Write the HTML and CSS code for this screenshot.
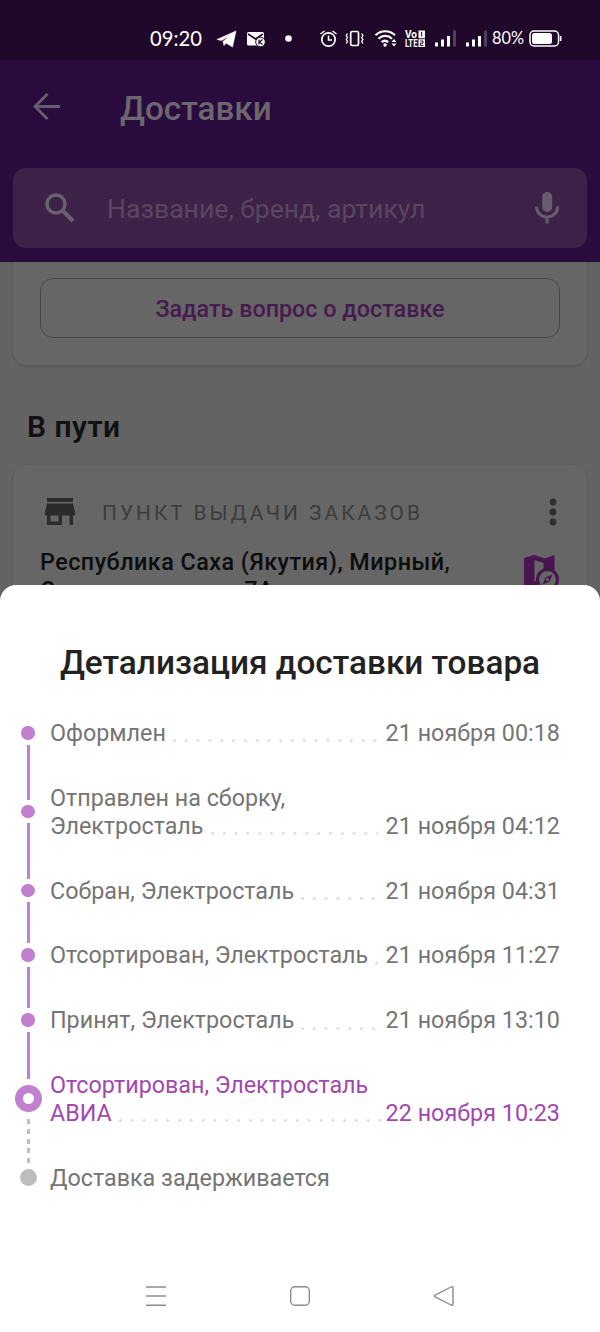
FILE: index.html
```
<!DOCTYPE html>
<html lang="ru">
<head>
<meta charset="utf-8">
<title>Доставки</title>
<link rel="stylesheet" href="styles.css">
</head>
<body>
<div class="screen">
  <div class="backdrop">
    <div class="status">
      <span class="time">09:20</span>
      <svg class="status-icons" width="390" height="60" viewBox="210 0 390 60" fill="none" stroke="#fff">
        <path d="M217 39.500 236 31 232.500 47 226 43 224 45.500 223 41.500 230 35.500 221.500 40.500Z" fill="#fff" stroke="#fff" stroke-width=".6"/>
        <rect x="247" y="32" width="17" height="13.500" rx="1.500" fill="#fff" stroke="none"/>
        <path d="M248 34 255.500 39 263 34" stroke="#1f0829" stroke-width="1.600"/>
        <circle cx="260.500" cy="42" r="4.800" fill="#fff" stroke="#1f0829"/>
        <path d="M259 39.500v5M262.500 39.500l-3 2.500 3 2.500" stroke="#1f0829" stroke-width="1.200"/>
        <circle cx="288.500" cy="38.500" r="3.300" fill="#fff" stroke="none"/>
        <circle cx="328.500" cy="39.500" r="6.700" stroke-width="1.700"/>
        <path d="M328.500 35.500v4.500h3.500M320.500 34l4-3M336.500 34l-4-3" stroke-width="1.500"/>
        <rect x="350.700" y="31.500" width="7.800" height="14" rx="1.500" stroke-width="1.700"/>
        <path d="M347.500 33.500l-1.200 2 1.200 2-1.200 2 1.200 2-1.200 2M361.700 33.500l1.200 2-1.200 2 1.200 2-1.200 2 1.200 2" stroke-width="1.300"/>
        <path d="M375.500 35.200a14 14 0 0 1 19.500 0M378.500 38.700a9.600 9.600 0 0 1 13.500 0M381.600 42.100a5.200 5.200 0 0 1 6.600 0" stroke-width="2.200"/>
        <circle cx="385" cy="45" r="1.700" fill="#fff" stroke="none"/>
        <path d="M391.500 42 394 39l2.500 3zM391.500 43.500l2.500 3 2.500-3z" fill="#fff" stroke="none"/>
        <g fill="#fff" stroke="none" class="volte">
          <text x="405" y="38" textLength="12" lengthAdjust="spacingAndGlyphs">Vo</text>
          <text x="405" y="47" textLength="12.500" lengthAdjust="spacingAndGlyphs">LTE</text>
        </g>
        <path d="M418.500 30.500h6.500v7.800h-6.500zM418.500 39.300h6.500v7.800h-6.500z" fill="#fff" stroke="none"/>
        <path d="M421.700 32v4.500M420.200 41h2.800v2.200h-2.500v2.200h3" stroke="#1f0829"/>
        <g fill="#fff" stroke="none">
          <path d="M435 42.500h3v4h-3zM441 39.500h3v7h-3zM447 36h3v10.500h-3z"/>
          <path d="M453 30.500h3v16h-3zM484 30.500h3v16h-3z" opacity=".22"/>
          <path d="M466 42.500h3v4h-3zM472 39.500h3v7h-3zM478 36h3v10.500h-3z"/>
        </g>
        <text x="492" y="44" class="percent" textLength="32" lengthAdjust="spacingAndGlyphs" fill="#fff" stroke="none">80%</text>
        <rect x="530" y="31" width="28.500" height="15" rx="4" stroke-width="1.500"/>
        <rect x="532" y="33" width="20" height="11" rx="2.500" fill="#fff" stroke="none"/>
        <path d="M560.600 36v5" stroke-width="1.700"/>
      </svg>
    </div>
    <header class="header">
      <div class="title-bar">
        <svg width="28" height="28" viewBox="0 0 28 28" fill="none" stroke="#665d6c" stroke-width="3"><path d="M27 13.500H3M14.500 1 2 13.500 14.500 26"/></svg>
        <h1 class="page-title">Доставки</h1>
      </div>
      <div class="search">
        <svg width="32" height="32" viewBox="0 0 32 32" fill="none" stroke="#696070"><circle cx="12" cy="12" r="9" stroke-width="3.400"/><path d="M18.500 18.500 29 29" stroke-width="4"/></svg>
        <span class="placeholder">Название, бренд, артикул</span>
        <svg width="26" height="34" viewBox="0 0 26 34"><rect x="8.200" y="1" width="10" height="20" rx="5" fill="#695c70"/><path d="M2.500 15.500a10.600 10.600 0 0 0 21.200 0M13.100 26v6.500" fill="none" stroke="#695c70" stroke-width="3"/></svg>
      </div>
    </header>
    <div class="content">
      <div class="card card-question"><div class="outline-button">Задать вопрос о доставке</div></div>
      <h2 class="section-title">В пути</h2>
      <div class="card card-point">
        <div class="point-head">
          <svg width="32" height="28" viewBox="0 0 32 28" fill="#2b2b2b"><path d="M3 0h26v4H3zM3 5.500h26L31 14v3.500H29V27h-3.500v-9.500H18V27H3V17.500H1V14zM6.500 17.500v6h8v-6z" fill-rule="evenodd"/></svg>
          <span class="point-label">ПУНКТ ВЫДАЧИ ЗАКАЗОВ</span>
          <svg width="8" height="28" viewBox="0 0 8 28" fill="#303030"><circle cx="4" cy="4" r="3.400"/><circle cx="4" cy="14" r="3.400"/><circle cx="4" cy="24" r="3.400"/></svg>
        </div>
        <div class="point-body">
          <p class="address">Республика Саха (Якутия), Мирный,<br><span class="street">Советская улица</span> 7А</p>
          <svg class="map" width="38" height="38" viewBox="0 0 38 38"><path d="M1 3 11 0 22 3.500 31.500 0V30L21 34 11 30 1 34Z" fill="#481550"/><path d="M11.500 5 20.500 8V29L11.500 26Z" fill="#666"/><circle cx="24.500" cy="24.500" r="10" fill="#666" stroke="#481550" stroke-width="3"/><path d="M29.500 19.500 26.500 26.500 19.500 29.500 22.500 22.500Z" fill="#481550"/><circle cx="24.500" cy="24.500" r="1.400" fill="#666"/></svg>
        </div>
      </div>
    </div>
  </div>
  <section class="sheet">
    <h2 class="sheet-title">Детализация доставки товара</h2>
    <ol class="timeline">
      <li class="step first"><div class="track"><i class="line"></i><b class="dot"></b><i class="line"></i></div><span class="label">Оформлен</span><span class="leader"></span><time>21 ноября 00:18</time></li>
      <li class="step"><div class="track"><i class="line"></i><b class="dot"></b><i class="line"></i></div><span class="label">Отправлен на сборку,<br>Электросталь</span><span class="leader from-second"></span><time>21 ноября 04:12</time></li>
      <li class="step"><div class="track"><i class="line"></i><b class="dot"></b><i class="line"></i></div><span class="label">Собран, Электросталь</span><span class="leader"></span><time>21 ноября 04:31</time></li>
      <li class="step"><div class="track"><i class="line"></i><b class="dot"></b><i class="line"></i></div><span class="label">Отсортирован, Электросталь</span><span class="leader"></span><time>21 ноября 11:27</time></li>
      <li class="step"><div class="track"><i class="line"></i><b class="dot"></b><i class="line"></i></div><span class="label">Принят, Электросталь</span><span class="leader"></span><time>21 ноября 13:10</time></li>
      <li class="step current"><div class="track"><i class="line"></i><b class="dot"></b><i class="line dashed"></i></div><span class="label">Отсортирован, Электросталь<br>АВИА</span><span class="leader from-current"></span><time>22 ноября 10:23</time></li>
      <li class="step pending"><div class="track"><i class="line dashed"></i><b class="dot"></b><i class="line"></i></div><span class="label">Доставка задерживается</span></li>
    </ol>
    <nav class="system-nav">
      <svg width="22" height="22" viewBox="0 0 22 22" stroke="#8c8c8c" stroke-width="1.500"><path d="M1 2h20M1 11h20M1 20.300h20"/></svg>
      <svg width="22" height="22" viewBox="0 0 22 22" fill="none" stroke="#8c8c8c" stroke-width="1.400"><rect x="1.700" y="1.700" width="18.600" height="18.600" rx="4"/></svg>
      <svg width="22" height="22" viewBox="0 0 22 22" fill="none" stroke="#8c8c8c" stroke-width="1.400" stroke-linejoin="round"><path d="M2 10.200 18 2Q20 1.300 20 3.200V18.800Q20 20.700 18 20L2 11.800Q.8 11 2 10.200Z"/></svg>
    </nav>
  </section>
</div>
</body>
</html>
```
FILE: styles.css
```
* { box-sizing: border-box; }
body, h1, h2, p, ol { margin: 0; padding: 0; }
body { font-family: Roboto, "Noto Sans", sans-serif; background: #636363; }
svg { display: block; flex: none; }
.screen { width: 600px; height: 1332px; display: flex; flex-direction: column; overflow: hidden; }
.backdrop { height: 585px; flex: none; }
.status { height: 60px; background: #1f0829; display: flex; align-items: center; padding-left: 150px; color: #fff; }
.time { width: 60px; flex: none; font: 20.200px/24px Lato, sans-serif; margin-top: 16px; }
.volte { font: bold 10.500px Roboto, sans-serif; }
.percent { font: 17px Lato, sans-serif; }
.header { height: 202px; background: #2a0b3d; padding: 0 13px; }
.title-bar { height: 108px; display: flex; align-items: center; gap: 59px; padding: 0 0 14px 20px; }
.page-title { font-size: 33.300px; line-height: 40px; font-weight: 500; color: #6c666f; padding-top: 3px; }
.search { height: 80px; border-radius: 13px; background: #3c2247; display: flex; align-items: center; padding: 0 27px 0 31px; }
.placeholder { flex: 1; margin-left: 31px; padding-top: 2px; font-size: 26.600px; line-height: 32px; color: #5b4562; }
.content { height: 323px; overflow: hidden; padding: 0 13px; }
.card { background: #666; box-shadow: 0 1px 2px 1px #5a5a5a; }
.card-question { height: 103px; border-radius: 0 0 14px 14px; padding: 16px 27px; }
.outline-button { height: 60px; border: 1.500px solid #474747; border-radius: 13px; text-align: center; font-size: 23.330px; line-height: 60px; font-weight: 500; color: #471b50; }
.section-title { font-size: 30px; line-height: 36px; font-weight: 600; letter-spacing: .5px; color: #111; padding: 44px 0 20px 14px; }
.card-point { height: 170px; border-radius: 14px; padding: 33px 28px 0 27px; }
.point-head { display: flex; align-items: center; height: 28px; padding-left: 4px; }
.point-label { flex: 1; margin-left: 26px; padding-top: 2px; font-size: 20.800px; letter-spacing: 3.050px; color: #3c3c3c; }
.point-head svg:last-child { margin-right: 2px; }
.point-body { display: flex; justify-content: space-between; padding-top: 22px; }
.address { font-size: 23.330px; line-height: 28px; font-weight: 500; letter-spacing: .48px; color: #0d0d0d; white-space: nowrap; }
.street { display: inline-block; width: 198px; }
.map { margin: 7px -2px 0 0; }
.sheet { flex: 1; background: #fff; border-radius: 16px 16px 0 0; display: flex; flex-direction: column; }
.sheet-title { font-size: 33.330px; line-height: 40px; font-weight: 500; text-align: center; color: #222; padding-top: 58px; }
.timeline { list-style: none; padding: 17.500px 40px 0 10px; font-size: 23.300px; line-height: 27.340px; color: #757575; }
.step { display: flex; align-items: flex-end; }
.label { margin: 19.800px 0 17.800px 4px; white-space: nowrap; }
.track { width: 36px; align-self: stretch; display: flex; flex-direction: column; align-items: center; gap: 5px; }
.line { flex: 1; width: 3px; background: #c17fd0; }
.first .line:first-child, .pending .line:last-child { visibility: hidden; }
.dot { width: 13.300px; height: 13.300px; border-radius: 50%; background: #c17fd0; }
.leader { flex: 1; height: 3px; margin: 0 8px 23px 7px; background: radial-gradient(circle at 1.500px 1.500px, #ddd 1px, transparent 1.700px) 0 0 / 11.800px 3px repeat-x; }
/* The leader starts after the shorter second line of a wrapped label. */
.from-second { margin-left: -74px; }
.from-current { margin-left: -249px; margin-right: 4px; }
time { margin-bottom: 17.800px; white-space: nowrap; letter-spacing: .04px; }
.current { color: #a148b0; }
.current .dot { width: 27px; height: 27px; background: #fff; border: 8.500px solid #c17fd0; }
.current .track { gap: 6.500px; }
.line.dashed { background: repeating-linear-gradient(#bdbdbd 0 5px, transparent 5px 10px); }
.pending .line.dashed { background: repeating-linear-gradient(transparent 0 2.500px, #bdbdbd 2.500px 7.500px, transparent 7.500px 10px); }
.pending .dot { width: 17px; height: 17px; background: #bdbdbd; }
.system-nav { margin-top: auto; padding: 0 145px 25px; display: flex; justify-content: space-between; }
```
